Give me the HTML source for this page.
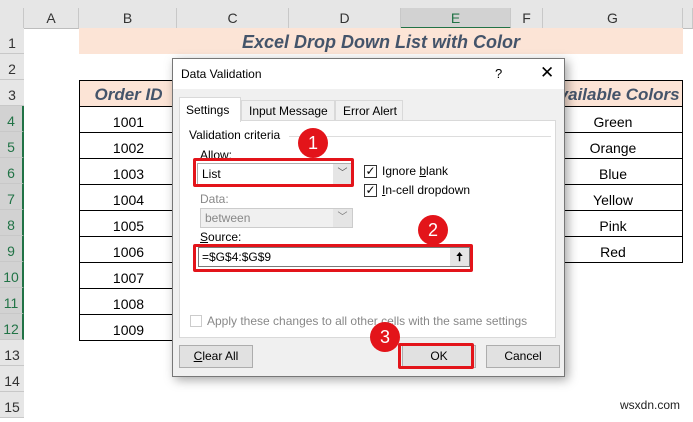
<!DOCTYPE html><html><head><style>
*{margin:0;padding:0;box-sizing:border-box}
body{width:693px;height:414px;overflow:hidden;background:#fff;font-family:"Liberation Sans",Calibri,sans-serif;position:relative;font-size:14px;color:#000}
.a{position:absolute}
.ch{position:absolute;top:8px;height:21px;background:#e6e6e6;border-right:1px solid #c8c8c8;border-bottom:1px solid #bdbdbd;text-align:center;line-height:21px;font-size:14px;color:#333}
.rh{position:absolute;left:0;width:24px;height:26px;background:#e6e6e6;border-bottom:1px solid #c8c8c8;text-align:center;line-height:30px;font-size:14px;color:#333}
.rh.s{background:#d2d2d2;color:#217346;border-right:2px solid #217346}
.cell{position:absolute;border:1px solid #000;text-align:center;line-height:30px;font-size:14px}
.dlg{position:absolute;left:172px;top:58px;width:393px;height:319px;background:#f0f0f0;border:1px solid #777;box-shadow:3px 3px 10px rgba(0,0,0,.35);font-size:12px}
.btn{position:absolute;height:23px;background:#e1e1e1;border:1px solid #adadad;text-align:center;line-height:21px;font-size:12px}
.red{position:absolute;border:3px solid #e3141a;border-radius:2px}
.circ{position:absolute;width:30px;height:30px;border-radius:50%;background:#e3141a;color:#fff;text-align:center;line-height:30px;font-size:18px}
.cb{position:absolute;width:13px;height:13px;border:1px solid #333;background:#fff;font-size:12px;line-height:11px;text-align:center}
</style></head><body>
<div class="a" style="left:0;top:0;width:693px;height:8px;background:#e6e6e6"></div>
<div class="ch" style="left:0;width:24px;background:#e6e6e6"></div>
<div class="ch" style="left:24px;width:55px">A</div>
<div class="ch" style="left:79px;width:98px">B</div>
<div class="ch" style="left:177px;width:112px">C</div>
<div class="ch" style="left:289px;width:112px">D</div>
<div class="ch" style="left:401px;width:110px;background:#d2d2d2;color:#217346;border-bottom:2px solid #217346">E</div>
<div class="ch" style="left:511px;width:32px">F</div>
<div class="ch" style="left:543px;width:140px">G</div>
<div class="ch" style="left:683px;width:10px"></div>
<div class="rh" style="top:28px">1</div><div class="rh" style="top:54px">2</div><div class="rh" style="top:80px">3</div>
<div class="rh s" style="top:106px">4</div><div class="rh s" style="top:132px">5</div><div class="rh s" style="top:158px">6</div>
<div class="rh s" style="top:184px">7</div><div class="rh s" style="top:210px">8</div><div class="rh s" style="top:236px">9</div>
<div class="rh s" style="top:262px">10</div><div class="rh s" style="top:288px">11</div><div class="rh s" style="top:314px">12</div>
<div class="rh" style="top:340px">13</div><div class="rh" style="top:366px">14</div><div class="rh" style="top:392px">15</div>
<div class="a" style="left:79px;top:28px;width:604px;height:26px;background:#fce4d6;text-align:center;line-height:28px;font-weight:bold;font-style:italic;font-size:18px;color:#44546a">Excel Drop Down List with Color</div>
<div class="cell" style="left:79px;top:80px;width:99px;height:27px;background:#fce4d6;font-weight:bold;font-style:italic;font-size:17px;color:#44546a;line-height:28px">Order ID</div>
<div class="cell" style="left:79px;top:106px;width:99px;height:27px">1001</div>
<div class="cell" style="left:79px;top:132px;width:99px;height:27px">1002</div>
<div class="cell" style="left:79px;top:158px;width:99px;height:27px">1003</div>
<div class="cell" style="left:79px;top:184px;width:99px;height:27px">1004</div>
<div class="cell" style="left:79px;top:210px;width:99px;height:27px">1005</div>
<div class="cell" style="left:79px;top:236px;width:99px;height:27px">1006</div>
<div class="cell" style="left:79px;top:262px;width:99px;height:27px">1007</div>
<div class="cell" style="left:79px;top:288px;width:99px;height:27px">1008</div>
<div class="cell" style="left:79px;top:314px;width:99px;height:27px">1009</div>
<div class="cell" style="left:543px;top:80px;width:140px;height:27px;background:#fce4d6;font-weight:bold;font-style:italic;font-size:17px;color:#44546a;line-height:28px">Available Colors</div>
<div class="cell" style="left:543px;top:106px;width:140px;height:27px">Green</div>
<div class="cell" style="left:543px;top:132px;width:140px;height:27px">Orange</div>
<div class="cell" style="left:543px;top:158px;width:140px;height:27px">Blue</div>
<div class="cell" style="left:543px;top:184px;width:140px;height:27px">Yellow</div>
<div class="cell" style="left:543px;top:210px;width:140px;height:27px">Pink</div>
<div class="cell" style="left:543px;top:236px;width:140px;height:27px">Red</div>

<div class="dlg">
<div class="a" style="left:0;top:0;width:391px;height:30px;background:#fff"></div>
<div class="a" style="left:8px;top:8px;font-size:12px">Data Validation</div>
<div class="a" style="left:322px;top:7px;font-size:13px">?</div>
<div class="a" style="left:367px;top:4px;font-size:17px">✕</div>
<div class="a" style="left:6px;top:61px;width:377px;height:218px;background:#fff;border:1px solid #d9d9d9"></div>
<div class="a" style="left:6px;top:38px;width:62px;height:25px;background:#fff;border:1px solid #d9d9d9;border-bottom:none;padding:5px 0 0 6px">Settings</div>
<div class="a" style="left:68px;top:41px;width:94px;height:21px;border:1px solid #d9d9d9;border-bottom:none;padding:3px 0 0 7px">Input Message</div>
<div class="a" style="left:162px;top:41px;width:68px;height:21px;border:1px solid #d9d9d9;border-bottom:none;padding:3px 0 0 7px">Error Alert</div>
<div class="a" style="left:16px;top:69px">Validation criteria</div>
<div class="a" style="left:116px;top:77px;width:262px;height:1px;background:#ddd"></div>
<div class="a" style="left:27px;top:89px">Allow:</div>
<div class="a" style="left:24px;top:104px;width:156px;height:22px;border:1px solid #adadad;background:#fff;padding:3px 0 0 4px">List</div>
<div class="a" style="left:160px;top:105px;width:19px;height:20px;background:#e5e5e5;text-align:center;font-size:10px;line-height:20px;color:#555">﹀</div>
<div class="cb" style="left:191px;top:106px">✓</div><div class="a" style="left:209px;top:105px">Ignore <u>b</u>lank</div>
<div class="cb" style="left:191px;top:125px">✓</div><div class="a" style="left:209px;top:124px"><u>I</u>n-cell dropdown</div>
<div class="a" style="left:27px;top:133px;color:#888">Data:</div>
<div class="a" style="left:27px;top:149px;width:153px;height:20px;border:1px solid #ccc;background:#f0f0f0;padding:2px 0 0 4px;color:#888">between</div>
<div class="a" style="left:160px;top:150px;width:19px;height:18px;background:#e5e5e5;text-align:center;font-size:10px;line-height:18px;color:#777">﹀</div>
<div class="a" style="left:27px;top:171px"><u>S</u>ource:</div>
<div class="a" style="left:25px;top:188px;width:272px;height:20px;border:1px solid #7a7a7a;background:#fff;padding:2px 0 0 3px">=$G$4:$G$9</div>
<div class="a" style="left:277px;top:189px;width:19px;height:18px;background:#e5e5e5;text-align:center;font-weight:bold;line-height:18px">🠅</div>
<div class="a" style="left:17px;top:256px;width:12px;height:12px;border:1px solid #ccc;background:#fff"></div>
<div class="a" style="left:34px;top:255px;color:#888">Apply these changes to all other cells with the same settings</div>
<div class="btn" style="left:6px;top:286px;width:74px"><u>C</u>lear All</div>
<div class="btn" style="left:229px;top:286px;width:74px">OK</div>
<div class="btn" style="left:313px;top:286px;width:74px">Cancel</div>
</div>
<div class="red" style="left:193px;top:158px;width:161px;height:29px"></div>
<div class="red" style="left:193px;top:244px;width:280px;height:28px"></div>
<div class="red" style="left:398px;top:343px;width:76px;height:26px"></div>
<div class="circ" style="left:298px;top:128px">1</div>
<div class="circ" style="left:418px;top:215px">2</div>
<div class="circ" style="left:370px;top:322px">3</div>
<div class="a" style="left:620px;top:398px;font-size:12px;color:#222">wsxdn.com</div>
</body></html>
